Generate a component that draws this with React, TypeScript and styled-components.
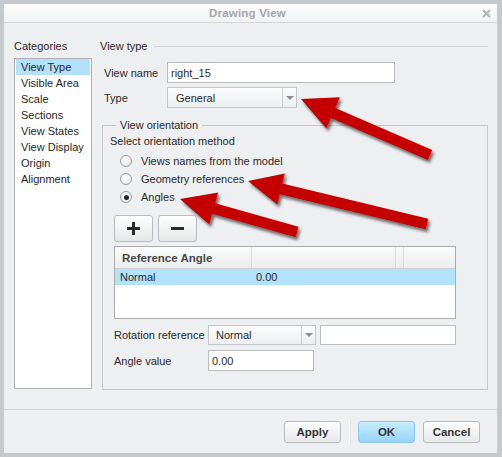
import React from 'react';
import styled, { createGlobalStyle, css } from 'styled-components';

const GlobalStyle = createGlobalStyle`
  html, body {
    margin: 0;
    padding: 0;
    background: #c6c9cc;
  }
  body {
    font-family: "Liberation Sans", Arial, sans-serif;
    font-size: 11px;
    color: #2a2a2a;
  }
  * {
    box-sizing: border-box;
  }
`;

const Frame = styled.div`
  position: relative;
  width: 502px;
  height: 457px;
  background: #c6c9cc;
  padding: 4px 5px 4px 4px;
  display: flex;
  flex-direction: column;
`;

const TitleBar = styled.div`
  height: 19px;
  display: grid;
  grid-template-columns: 1fr auto 1fr;
  align-items: center;
  background: linear-gradient(#fcfcfc, #f1f2f3);
  border-bottom: 1px solid #d4d6d9;
  padding-right: 6px;
`;

const Title = styled.div`
  grid-column: 2;
  font-weight: 700;
  font-size: 11.5px;
  color: #a4a6a8;
  letter-spacing: 0.2px;
`;

const CloseBox = styled.div`
  grid-column: 3;
  justify-self: end;
  display: flex;
`;

const Body = styled.div`
  flex: 1;
  display: flex;
  flex-direction: column;
  background: #eeeff1;
`;

const Main = styled.div`
  height: 386px;
  display: flex;
  align-items: flex-start;
  padding: 16px 0 0 10px;
`;

const LeftCol = styled.div`
  width: 78px;
  display: flex;
  flex-direction: column;
`;

const Caption = styled.div`
  line-height: 14px;
  height: 14px;
`;

const CatList = styled.div`
  margin-top: 5px;
  height: 331px;
  background: #fff;
  border: 1px solid #aeb0b3;
  padding: 0 1px;
`;

const CatItem = styled.div<{ $selected?: boolean }>`
  height: 16px;
  line-height: 16px;
  padding-left: 5px;
  color: #262626;
  white-space: nowrap;
  ${(p) =>
    p.$selected &&
    css`
      background: #b3e0fb;
    `}
`;

const RightCol = styled.div`
  width: 388px;
  margin-left: 8px;
  display: flex;
  flex-direction: column;
`;

const SectionHeader = styled.div`
  display: flex;
  align-items: center;
  height: 14px;
  line-height: 14px;

  &::after {
    content: '';
    flex: 1;
    height: 1px;
    background: #cfd1d4;
    margin-left: 6px;
  }
`;

const FormRow = styled.div<{ $top: number }>`
  display: flex;
  align-items: center;
  padding-left: 4px;
  margin-top: ${(p) => p.$top}px;
`;

const Label = styled.div<{ $w: number }>`
  width: ${(p) => p.$w}px;
  white-space: nowrap;
`;

const TextBox = styled.div<{ $w: number; $h?: number; $ml?: number }>`
  width: ${(p) => p.$w}px;
  height: ${(p) => p.$h || 21}px;
  margin-left: ${(p) => p.$ml || 0}px;
  background: #fff;
  border: 1px solid #b9bbbe;
  padding: 0 3px;
  display: flex;
  align-items: center;
`;

const Combo = styled.div<{ $w: number; $h?: number }>`
  width: ${(p) => p.$w}px;
  height: ${(p) => p.$h || 21}px;
  display: flex;
  border: 1px solid #c3c5c8;
  background: linear-gradient(#fdfdfd, #eceeef);
`;

const ComboValue = styled.div<{ $pl: number }>`
  flex: 1;
  display: flex;
  align-items: center;
  padding-left: ${(p) => p.$pl}px;
`;

const ComboArrow = styled.div`
  width: 14px;
  border-left: 1px solid #cacccf;
  display: flex;
  align-items: center;
  justify-content: center;

  &::before {
    content: '';
    border-left: 4px solid transparent;
    border-right: 4px solid transparent;
    border-top: 4px solid #8a8c8e;
  }
`;

const Group = styled.fieldset`
  margin: 10px 0 0 2px;
  border: 1px solid #c6c8cb;
  padding: 2px 0 18px 7px;
  min-width: 0;
`;

const Legend = styled.legend`
  margin-left: 6px;
  padding: 0 4px;
  line-height: 14px;
`;

const PlainText = styled.div`
  line-height: 14px;
`;

const RadioList = styled.div`
  margin-top: 4px;
  padding-left: 10px;
  display: flex;
  flex-direction: column;
`;

const RadioRow = styled.div`
  height: 18px;
  display: flex;
  align-items: center;
`;

const RadioDot = styled.span<{ $checked?: boolean }>`
  width: 12px;
  height: 12px;
  border-radius: 50%;
  border: 1px solid #9b9da0;
  background: radial-gradient(circle at 40% 35%, #ffffff, #e2e3e5);
  margin-right: 9px;
  display: flex;
  align-items: center;
  justify-content: center;

  &::after {
    content: '';
    width: 5px;
    height: 5px;
    border-radius: 50%;
    background: ${(p) => (p.$checked ? '#222' : 'transparent')};
  }
`;

const ToolRow = styled.div`
  display: flex;
  gap: 5px;
  margin-top: 9px;
  padding-left: 4px;
`;

const ToolButton = styled.div`
  width: 39px;
  height: 27px;
  border: 1px solid #b9bbbe;
  border-radius: 3px;
  background: linear-gradient(#fefefe, #e6e7e8);
  display: flex;
  align-items: center;
  justify-content: center;
`;

const Table = styled.div`
  margin: 4px 0 0 4px;
  width: 342px;
  height: 73px;
  border: 1px solid #a9abae;
  background: #fff;
`;

const TableHead = styled.div`
  height: 22px;
  display: grid;
  grid-template-columns: 137px 144px 5px 1fr;
  background: linear-gradient(#fbfbfb, #ebeced);
  border-bottom: 1px solid #cdcfd2;
`;

const HeadCell = styled.div<{ $last?: boolean }>`
  display: flex;
  align-items: center;
  padding-left: 7px;
  font-weight: 700;
  font-size: 11.5px;
  color: #474747;
  border-right: ${(p) => (p.$last ? 'none' : '1px solid #dadcdf')};
`;

const TableRow = styled.div<{ $selected?: boolean }>`
  height: 16px;
  display: grid;
  grid-template-columns: 137px 1fr;
  align-items: center;
  background: ${(p) => (p.$selected ? '#b3e2fc' : 'transparent')};
`;

const Cell = styled.div<{ $pl: number }>`
  padding-left: ${(p) => p.$pl}px;
`;

const Footer = styled.div`
  flex: 1;
  border-top: 1px solid #d3d5d8;
  display: flex;
  justify-content: flex-end;
  align-items: flex-start;
  padding: 11px 17px 0 0;
`;

const DialogButton = styled.div<{ $primary?: boolean }>`
  width: 57px;
  height: 22px;
  border-radius: 3px;
  display: flex;
  align-items: center;
  justify-content: center;
  font-weight: 700;
  font-size: 11.5px;
  color: #333;
  border: 1px solid ${(p) => (p.$primary ? '#8ec6ea' : '#b8babd')};
  background: ${(p) =>
    p.$primary
      ? 'linear-gradient(#c9ebfd, #96d4fa)'
      : 'linear-gradient(#fdfdfd, #e7e8e9)'};
`;

const ButtonDivider = styled.div`
  width: 1px;
  height: 22px;
  margin: 0 8px;
  background: #fbfbfb;
  box-shadow: 1px 0 0 #e0e2e4;
`;

const Gap = styled.div<{ $w: number }>`
  width: ${(p) => p.$w}px;
`;

const Overlay = styled.svg`
  position: absolute;
  left: 0;
  top: 0;
  pointer-events: none;
`;

type Pt = [number, number];

const arrowPoints = (tip: Pt, tail: Pt, headLen: number, headHalf: number, shaftHalf: number) => {
  const dx = tail[0] - tip[0];
  const dy = tail[1] - tip[1];
  const len = Math.hypot(dx, dy);
  const ux = dx / len;
  const uy = dy / len;
  const nx = -uy;
  const ny = ux;
  const bx = tip[0] + ux * headLen;
  const by = tip[1] + uy * headLen;
  const pts: Pt[] = [
    tip,
    [bx + nx * headHalf, by + ny * headHalf],
    [bx + nx * shaftHalf, by + ny * shaftHalf],
    [tail[0] + nx * shaftHalf, tail[1] + ny * shaftHalf],
    [tail[0] - nx * shaftHalf, tail[1] - ny * shaftHalf],
    [bx - nx * shaftHalf, by - ny * shaftHalf],
    [bx - nx * headHalf, by - ny * headHalf],
  ];
  return pts.map((p) => `${p[0].toFixed(1)},${p[1].toFixed(1)}`).join(' ');
};

const arrows: { tip: Pt; tail: Pt; head: number; half: number }[] = [
  { tip: [301, 99], tail: [430, 155], head: 35, half: 17 },
  { tip: [248, 181], tail: [427, 224], head: 34, half: 16 },
  { tip: [180, 199], tail: [297, 232], head: 35, half: 16.5 },
];

const categories = [
  'View Type',
  'Visible Area',
  'Scale',
  'Sections',
  'View States',
  'View Display',
  'Origin',
  'Alignment',
];

const App: React.FC = () => {
  return (
    <>
      <GlobalStyle />
      <Frame>
        <TitleBar>
          <Title>Drawing View</Title>
          <CloseBox>
            <svg width="9" height="9" viewBox="0 0 9 9">
              <path d="M1 1 L8 8 M8 1 L1 8" stroke="#b3b5b7" strokeWidth="2.2" />
            </svg>
          </CloseBox>
        </TitleBar>
        <Body>
          <Main>
            <LeftCol>
              <Caption>Categories</Caption>
              <CatList>
                {categories.map((c, i) => (
                  <CatItem key={c} $selected={i === 0}>
                    {c}
                  </CatItem>
                ))}
              </CatList>
            </LeftCol>
            <RightCol>
              <SectionHeader>View type</SectionHeader>
              <FormRow $top={9}>
                <Label $w={63}>View name</Label>
                <TextBox $w={228}>right_15</TextBox>
              </FormRow>
              <FormRow $top={4}>
                <Label $w={63}>Type</Label>
                <Combo $w={130}>
                  <ComboValue $pl={8}>General</ComboValue>
                  <ComboArrow />
                </Combo>
              </FormRow>
              <Group>
                <Legend>View orientation</Legend>
                <PlainText>Select orientation method</PlainText>
                <RadioList>
                  <RadioRow>
                    <RadioDot />
                    Views names from the model
                  </RadioRow>
                  <RadioRow>
                    <RadioDot />
                    Geometry references
                  </RadioRow>
                  <RadioRow>
                    <RadioDot $checked />
                    Angles
                  </RadioRow>
                </RadioList>
                <ToolRow>
                  <ToolButton>
                    <svg width="13" height="13" viewBox="0 0 13 13">
                      <path d="M5 0h3v5h5v3H8v5H5V8H0V5h5z" fill="#2b2b2b" />
                    </svg>
                  </ToolButton>
                  <ToolButton>
                    <svg width="13" height="13" viewBox="0 0 13 13">
                      <path d="M0 5h13v3H0z" fill="#2b2b2b" />
                    </svg>
                  </ToolButton>
                </ToolRow>
                <Table>
                  <TableHead>
                    <HeadCell>Reference Angle</HeadCell>
                    <HeadCell />
                    <HeadCell />
                    <HeadCell $last />
                  </TableHead>
                  <TableRow $selected>
                    <Cell $pl={5}>Normal</Cell>
                    <Cell $pl={4}>0.00</Cell>
                  </TableRow>
                </Table>
                <FormRow $top={6}>
                  <Label $w={94}>Rotation reference</Label>
                  <Combo $w={108} $h={20}>
                    <ComboValue $pl={7}>Normal</ComboValue>
                    <ComboArrow />
                  </Combo>
                  <TextBox $w={136} $h={20} $ml={4} />
                </FormRow>
                <FormRow $top={5}>
                  <Label $w={94}>Angle value</Label>
                  <TextBox $w={106}>0.00</TextBox>
                </FormRow>
              </Group>
            </RightCol>
          </Main>
          <Footer>
            <DialogButton>Apply</DialogButton>
            <ButtonDivider />
            <DialogButton $primary>OK</DialogButton>
            <Gap $w={8} />
            <DialogButton>Cancel</DialogButton>
          </Footer>
        </Body>
        <Overlay width={502} height={457} viewBox="0 0 502 457">
          <defs>
            <filter id="shadow" x="-20%" y="-20%" width="140%" height="160%">
              <feDropShadow dx="2" dy="3" stdDeviation="1.8" floodColor="#000" floodOpacity="0.55" />
            </filter>
          </defs>
          {arrows.map((a, i) => (
            <polygon
              key={i}
              points={arrowPoints(a.tip, a.tail, a.head, a.half, 5.5)}
              fill="#c40000"
              filter="url(#shadow)"
            />
          ))}
        </Overlay>
      </Frame>
    </>
  );
};

export default App;
